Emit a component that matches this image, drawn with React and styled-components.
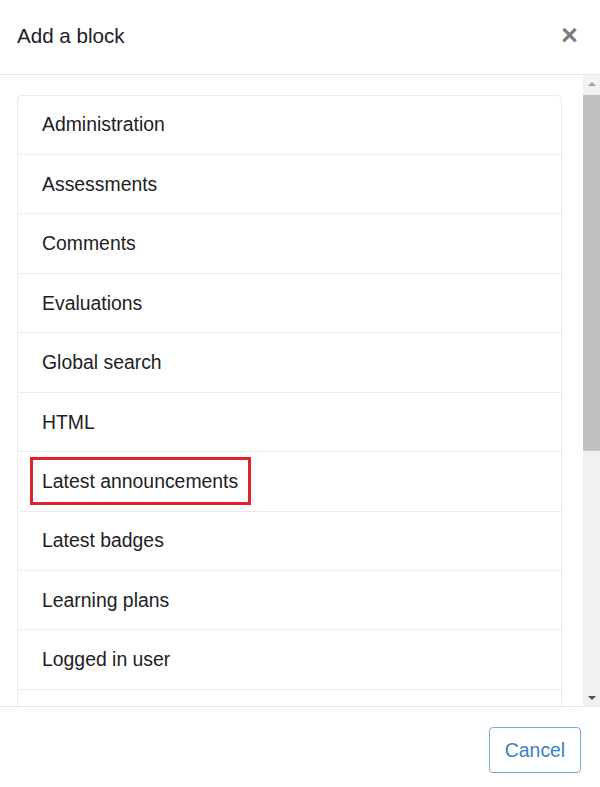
import React from 'react';
import styled, { createGlobalStyle } from 'styled-components';

const GlobalStyle = createGlobalStyle`
  html, body {
    margin: 0;
    padding: 0;
    background: #fff;
  }
  body {
    font-family: "Liberation Sans", Arial, sans-serif;
    color: #1d2125;
  }
`;

const Modal = styled.div`
  width: 600px;
  height: 787px;
  display: flex;
  flex-direction: column;
  background: #fff;
  overflow: hidden;
`;

const Header = styled.header`
  height: 70px;
  flex: none;
  display: flex;
  align-items: center;
  justify-content: space-between;
  padding: 0 22px 4px 17px;
  border-bottom: 1px solid #e6e6e6;
  box-sizing: content-box;
`;

const Title = styled.h5`
  margin: 0;
  font-size: 20.6px;
  font-weight: 400;
  line-height: 25px;
  color: #1d2125;
`;

const Close = styled.button`
  border: 0;
  background: none;
  padding: 0;
  font-family: "Liberation Sans", Arial, sans-serif;
  font-size: 29px;
  font-weight: 700;
  line-height: 1;
  color: #000;
  opacity: 0.5;
  cursor: pointer;
`;

const Body = styled.div`
  flex: 1;
  min-height: 0;
  display: flex;
`;

const Content = styled.div`
  flex: 1;
  overflow: hidden;
  padding: 19.5px 21px 0 17px;
`;

const List = styled.ul`
  list-style: none;
  margin: 0;
  padding: 0;
  border: 1px solid #ececec;
  border-radius: 4px;
`;

const Item = styled.li`
  box-sizing: border-box;
  height: 59.44px;
  display: flex;
  align-items: center;
  padding: 0 24px;
  font-size: 19.4px;
  line-height: 28.8px;
  border-bottom: 1px solid #ececec;
  color: #1d2125;
`;

const Marked = styled.span`
  position: relative;

  &::after {
    content: '';
    position: absolute;
    top: -10px;
    bottom: -9px;
    left: -12px;
    right: -13px;
    border: 3px solid #e3212b;
  }
`;

const Scrollbar = styled.div`
  width: 17px;
  flex: none;
  background: #f1f1f1;
  display: flex;
  flex-direction: column;
`;

const ScrollButton = styled.div`
  height: 17px;
  flex: none;
  display: flex;
  align-items: center;
  justify-content: center;
  margin-top: ${(p) => (p.$down ? 'auto' : '0')};
`;

const Arrow = styled.span`
  width: 0;
  height: 0;
  border-left: 4px solid transparent;
  border-right: 4px solid transparent;
  ${(p) =>
    p.$down
      ? 'border-top: 4px solid #505050;'
      : 'border-bottom: 4px solid #a3a3a3;'}
`;

const Thumb = styled.div`
  margin-top: 3px;
  height: 356px;
  background: #c1c1c1;
`;

const Footer = styled.footer`
  height: 81px;
  flex: none;
  display: flex;
  align-items: flex-start;
  justify-content: flex-end;
  padding: 20px 19px 0;
  box-sizing: border-box;
  border-top: 1px solid #e6e6e6;
`;

const CancelButton = styled.button`
  width: 92px;
  height: 46px;
  border: 1px solid #7aabdd;
  border-radius: 4px;
  background: #fff;
  color: #3a80c5;
  font-family: "Liberation Sans", Arial, sans-serif;
  font-size: 19.4px;
  cursor: pointer;
`;

const blocks = [
  'Administration',
  'Assessments',
  'Comments',
  'Evaluations',
  'Global search',
  'HTML',
  'Latest announcements',
  'Latest badges',
  'Learning plans',
  'Logged in user',
  'Mentees',
  'Navigation',
];

const App = () => {
  return (
    <Modal>
      <GlobalStyle />
      <Header>
        <Title>Add a block</Title>
        <Close aria-label="Close">×</Close>
      </Header>
      <Body>
        <Content>
          <List>
            {blocks.map((name) => (
              <Item key={name}>
                {name === 'Latest announcements' ? <Marked>{name}</Marked> : name}
              </Item>
            ))}
          </List>
        </Content>
        <Scrollbar>
          <ScrollButton>
            <Arrow />
          </ScrollButton>
          <Thumb />
          <ScrollButton $down>
            <Arrow $down />
          </ScrollButton>
        </Scrollbar>
      </Body>
      <Footer>
        <CancelButton>Cancel</CancelButton>
      </Footer>
    </Modal>
  );
};

export default App;
